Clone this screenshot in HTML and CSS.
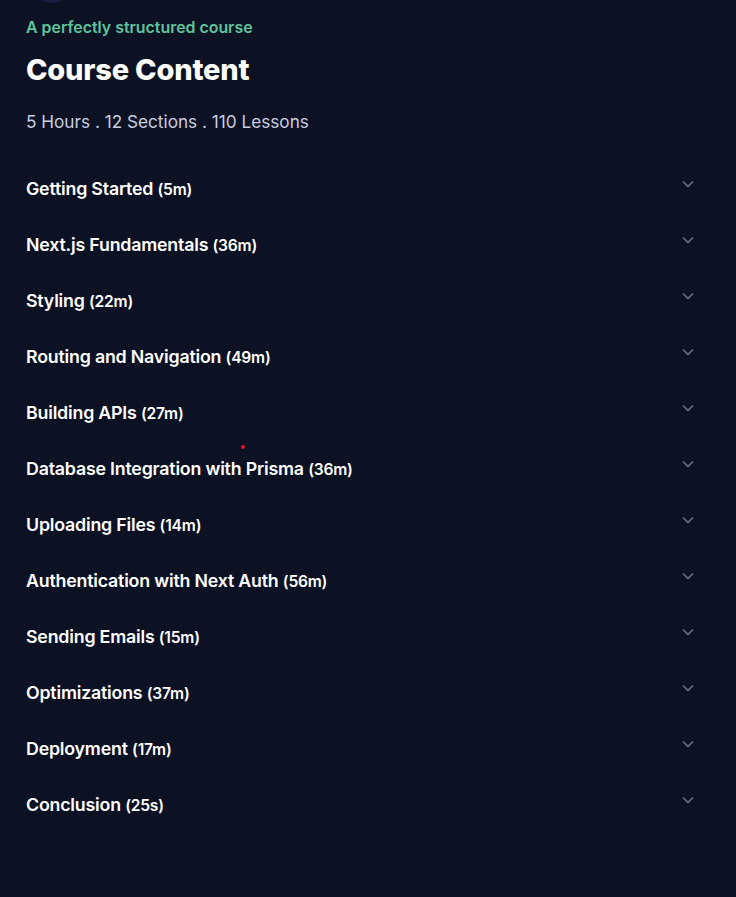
FILE: index.html
```html
<!DOCTYPE html>
<html>
<head>
<meta charset="utf-8">
<link rel="stylesheet" href="styles.css">
</head>
<body>
<div class="blob"></div>
<main class="wrap">
  <p class="eyebrow">A perfectly structured course</p>
  <h1 class="title">Course Content</h1>
  <p class="meta">5 Hours . 12 Sections . 110 Lessons</p>
  <ul class="sections">
    <li class="row"><span class="name">Getting Started <span class="dur">(5m)</span></span><svg class="chev" viewBox="0 0 12 8"><path d="M1 1.5l5 5 5-5"/></svg></li>
    <li class="row"><span class="name">Next.js Fundamentals <span class="dur">(36m)</span></span><svg class="chev" viewBox="0 0 12 8"><path d="M1 1.5l5 5 5-5"/></svg></li>
    <li class="row"><span class="name">Styling <span class="dur">(22m)</span></span><svg class="chev" viewBox="0 0 12 8"><path d="M1 1.5l5 5 5-5"/></svg></li>
    <li class="row"><span class="name">Routing and Navigation <span class="dur">(49m)</span></span><svg class="chev" viewBox="0 0 12 8"><path d="M1 1.5l5 5 5-5"/></svg></li>
    <li class="row"><span class="name">Building APIs <span class="dur">(27m)</span></span><svg class="chev" viewBox="0 0 12 8"><path d="M1 1.5l5 5 5-5"/></svg></li>
    <li class="row"><span class="name">Database Integration with Prisma <span class="dur">(36m)</span></span><svg class="chev" viewBox="0 0 12 8"><path d="M1 1.5l5 5 5-5"/></svg><span class="dot"></span></li>
    <li class="row"><span class="name">Uploading Files <span class="dur">(14m)</span></span><svg class="chev" viewBox="0 0 12 8"><path d="M1 1.5l5 5 5-5"/></svg></li>
    <li class="row"><span class="name">Authentication with Next Auth <span class="dur">(56m)</span></span><svg class="chev" viewBox="0 0 12 8"><path d="M1 1.5l5 5 5-5"/></svg></li>
    <li class="row"><span class="name">Sending Emails <span class="dur">(15m)</span></span><svg class="chev" viewBox="0 0 12 8"><path d="M1 1.5l5 5 5-5"/></svg></li>
    <li class="row"><span class="name">Optimizations <span class="dur">(37m)</span></span><svg class="chev" viewBox="0 0 12 8"><path d="M1 1.5l5 5 5-5"/></svg></li>
    <li class="row"><span class="name">Deployment <span class="dur">(17m)</span></span><svg class="chev" viewBox="0 0 12 8"><path d="M1 1.5l5 5 5-5"/></svg></li>
    <li class="row"><span class="name">Conclusion <span class="dur">(25s)</span></span><svg class="chev" viewBox="0 0 12 8"><path d="M1 1.5l5 5 5-5"/></svg></li>
  </ul>
</main>
</body>
</html>
```
FILE: styles.css
```css
html, body {
  margin: 0;
  padding: 0;
  background: #0c1123;
  height: 100%;
  overflow: hidden;
}
body {
  font-family: Inter, "Noto Sans", sans-serif;
  color: #fff;
  position: relative;
}
.blob {
  position: absolute;
  left: 32px;
  top: -40px;
  width: 40px;
  height: 43px;
  border-radius: 50%;
  background: #1d1c44;
}
.wrap {
  padding: 18px 42px 0 26px;
}
.eyebrow {
  margin: 0;
  font-size: 15.9px;
  font-weight: 600;
  line-height: 20px;
  color: #5ec49b;
}
.title {
  margin: 14px 0 0;
  font-size: 29px;
  font-weight: 800;
  line-height: 36px;
  letter-spacing: -0.2px;
}
.meta {
  margin: 22px 0 0;
  font-size: 17.2px;
  font-weight: 400;
  line-height: 24px;
  color: #c9cee0;
}
.sections {
  list-style: none;
  margin: 26px 0 0;
  padding: 0;
}
.row {
  position: relative;
  display: flex;
  align-items: center;
  justify-content: space-between;
  height: 56px;
}
.name {
  font-size: 17.8px;
  font-weight: 600;
  letter-spacing: -0.2px;
}
.dur {
  font-size: 15.6px;
}
.chev {
  width: 12px;
  height: 8px;
  margin-top: -8px;
  fill: none;
  stroke: #6b7088;
  stroke-width: 1.6;
}
.dot {
  position: absolute;
  left: 215px;
  top: 5px;
  width: 4px;
  height: 4px;
  border-radius: 50%;
  background: #e01818;
}
```
